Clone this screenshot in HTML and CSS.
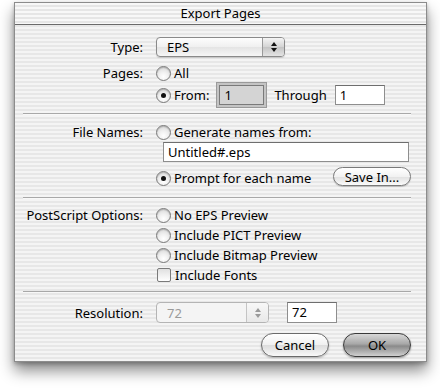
FILE: index.html
```html
<!DOCTYPE html>
<html>
<head>
<meta charset="utf-8">
<link rel="stylesheet" href="styles.css">
</head>
<body>
<div class="window">
  <div class="titlebar">Export Pages</div>
  <div class="content">
    <div class="row r-type">
      <div class="label">Type:</div>
      <div class="popup"><span class="popup-text">EPS</span><span class="popup-arrows"><span class="up"></span><span class="down"></span></span></div>
    </div>
    <div class="row r-all">
      <div class="label">Pages:</div>
      <div class="opt"><span class="radio"></span>All</div>
    </div>
    <div class="row r-from">
      <div class="label"></div>
      <div class="opt"><span class="radio on"></span>From:<span class="field focus">1</span><span class="through">Through</span><span class="field small">1</span></div>
    </div>
    <div class="sep s1"></div>
    <div class="row r-fn">
      <div class="label">File Names:</div>
      <div class="opt"><span class="radio"></span>Generate names from:</div>
    </div>
    <div class="row r-name">
      <div class="label"></div>
      <div class="field wide">Untitled#.eps</div>
    </div>
    <div class="row r-prompt">
      <div class="label"></div>
      <div class="opt grow"><span class="radio on"></span>Prompt for each name<span class="spacer"></span><span class="btn save">Save In...</span></div>
    </div>
    <div class="sep s2"></div>
    <div class="row r-ps">
      <div class="label">PostScript Options:</div>
      <div class="opt"><span class="radio"></span>No EPS Preview</div>
    </div>
    <div class="row r-ps">
      <div class="label"></div>
      <div class="opt"><span class="radio"></span>Include PICT Preview</div>
    </div>
    <div class="row r-ps">
      <div class="label"></div>
      <div class="opt"><span class="radio"></span>Include Bitmap Preview</div>
    </div>
    <div class="row r-ps">
      <div class="label"></div>
      <div class="opt"><span class="check"></span>Include Fonts</div>
    </div>
    <div class="sep s3"></div>
    <div class="row r-res">
      <div class="label">Resolution:</div>
      <div class="opt"><span class="combo"><span class="combo-text">72</span><span class="combo-arrows"><span class="up"></span><span class="down"></span></span></span><span class="field res">72</span></div>
    </div>
    <div class="buttons">
      <span class="btn cancel">Cancel</span>
      <span class="btn ok">OK</span>
    </div>
  </div>
</div>
</body>
</html>
```
FILE: styles.css
```css
html, body {
  margin: 0;
  padding: 0;
  background: #ffffff;
}
body {
  width: 440px;
  height: 392px;
  overflow: hidden;
  font-family: "Noto Sans", "DejaVu Sans", sans-serif;
  font-size: 13px;
  color: #000;
}
.window {
  margin: 2px 0 0 14px;
  width: 411px;
  height: 358px;
  border: 1px solid #8c8c8c;
  background: repeating-linear-gradient(to bottom, #f4f4f4 0px, #f4f4f4 2px, #e7e7e7 2px, #e7e7e7 4px);
  box-shadow: 0 9px 14px rgba(0,0,0,0.45), 0 2px 4px rgba(0,0,0,0.25);
  display: flex;
  flex-direction: column;
}
.titlebar {
  height: 21px;
  line-height: 21px;
  border-bottom: 1px solid #6a6a6a;
  text-align: center;
  font-size: 13px;
  background: repeating-linear-gradient(to bottom, #f8f8f8 0px, #f8f8f8 2px, #e6e6e6 2px, #e6e6e6 4px);
}
.content {
  padding: 0 15px 0 8px;
  display: flex;
  flex-direction: column;
}
.row {
  display: flex;
  align-items: center;
}
.label {
  width: 120px;
  flex: none;
  text-align: right;
  padding-right: 13px;
  white-space: nowrap;
}
.opt {
  display: flex;
  align-items: center;
  white-space: nowrap;
}
.opt.grow { flex: 1; }
.spacer { flex: 1; }
.r-type { margin-top: 12px; height: 20px; }
.r-all { margin-top: 7px; height: 18px; }
.r-from { margin-top: 2px; height: 22px; }
.s1 { margin-top: 7px; }
.r-fn { margin-top: 8px; height: 18px; }
.r-name { margin-top: 1px; height: 20px; }
.r-prompt { margin-top: 6px; height: 20px; }
.s2 { margin-top: 9px; }
.s2 + .r-ps { margin-top: 6px; }
.r-ps { height: 20px; }
.s3 { margin-top: 6px; }
.r-res { margin-top: 9px; height: 21px; }
.sep {
  height: 1px;
  background: #a8a8a8;
  border-bottom: 1px solid #f8f8f8;
}
.popup {
  width: 127px;
  height: 18px;
  border: 1px solid #8a8a8a;
  border-radius: 4px;
  background: linear-gradient(to bottom, #fdfdfd, #f0f0f0 50%, #e4e4e4 51%, #f6f6f6);
  display: flex;
  align-items: center;
  box-shadow: 0 1px 1px rgba(0,0,0,0.15);
}
.popup-text {
  flex: 1;
  padding-left: 10px;
  line-height: 18px;
}
.popup-arrows, .combo-arrows {
  width: 21px;
  height: 18px;
  border-left: 1px solid #9a9a9a;
  border-radius: 0 3px 3px 0;
  background: linear-gradient(to bottom, #f4f4f4, #d4d4d4 50%, #c4c4c4 51%, #e4e4e4);
  display: flex;
  flex-direction: column;
  align-items: center;
  justify-content: center;
  gap: 2px;
}
.up {
  width: 0; height: 0;
  border-left: 3px solid transparent;
  border-right: 3px solid transparent;
  border-bottom: 4px solid #111;
}
.down {
  width: 0; height: 0;
  border-left: 3px solid transparent;
  border-right: 3px solid transparent;
  border-top: 4px solid #111;
}
.radio {
  width: 13px;
  height: 13px;
  border: 1px solid #7a7a7a;
  border-radius: 50%;
  background: radial-gradient(circle at 50% 75%, #ffffff 0%, #f0f0f0 40%, #d0d0d0 100%);
  box-shadow: inset 0 1px 1px rgba(0,0,0,0.2);
  margin-right: 3px;
  display: inline-flex;
  align-items: center;
  justify-content: center;
  flex: none;
}
.radio.on::after {
  content: "";
  width: 5px;
  height: 5px;
  border-radius: 50%;
  background: #111;
}
.check {
  width: 12px;
  height: 12px;
  border: 1px solid #7a7a7a;
  border-radius: 2px;
  background: linear-gradient(to bottom, #e0e0e0, #ffffff);
  margin-right: 4px;
  margin-left: 1px;
  flex: none;
}
.field {
  display: inline-block;
  height: 18px;
  line-height: 18px;
  border: 1px solid #8e8e8e;
  border-top-color: #6e6e6e;
  background: #fff;
  padding-left: 4px;
  box-sizing: content-box;
}
.field.focus {
  width: 39px;
  margin-left: 10px;
  background: #d4d4d4;
  border: 1px solid #7a7a7a;
  box-shadow: 0 0 0 2px #c4c4c4, 0 0 0 3px #9a9a9a;
}
.through {
  margin-left: 10px;
  margin-right: 8px;
}
.field.small { width: 44px; }
.field.wide {
  width: 240px;
  margin-left: 7px;
}
.field.res {
  width: 44px;
  margin-left: 18px;
  height: 19px;
  line-height: 19px;
}
.combo {
  width: 111px;
  height: 19px;
  border: 1px solid #b4b4b4;
  border-radius: 4px;
  background: #f4f4f4;
  display: flex;
  align-items: center;
  color: #9a9a9a;
}
.combo-text { flex: 1; padding-left: 10px; }
.combo-arrows {
  height: 19px;
  border-left: 1px solid #c4c4c4;
  background: linear-gradient(to bottom, #f8f8f8, #e8e8e8);
}
.combo-arrows .up { border-bottom-color: #9a9a9a; }
.combo-arrows .down { border-top-color: #9a9a9a; }
.btn {
  display: inline-flex;
  align-items: center;
  justify-content: center;
  border-radius: 12px;
  white-space: nowrap;
}
.btn.save {
  width: 76px;
  height: 17px;
  border: 1px solid #7a7a7a;
  background: linear-gradient(to bottom, #ffffff, #f2f2f2 50%, #e0e0e0 51%, #fbfbfb);
  box-shadow: 0 1px 1px rgba(0,0,0,0.2);
  margin-top: -3px;
}
.buttons {
  margin-top: 10px;
  display: flex;
  justify-content: flex-end;
  gap: 14px;
  padding-right: 0;
}
.btn.cancel, .btn.ok {
  height: 22px;
  width: 66px;
  border: 1px solid #6a6a6a;
}
.btn.cancel {
  background: linear-gradient(to bottom, #ffffff, #f0f0f0 50%, #dcdcdc 51%, #f8f8f8);
  box-shadow: 0 1px 2px rgba(0,0,0,0.25);
}
.btn.ok {
  border-color: #3a3a3a;
  background: linear-gradient(to bottom, #d8d8d8, #a8a8a8 45%, #8a8a8a 55%, #b8b8b8 85%, #d0d0d0);
  box-shadow: 0 1px 2px rgba(0,0,0,0.35);
}
```
